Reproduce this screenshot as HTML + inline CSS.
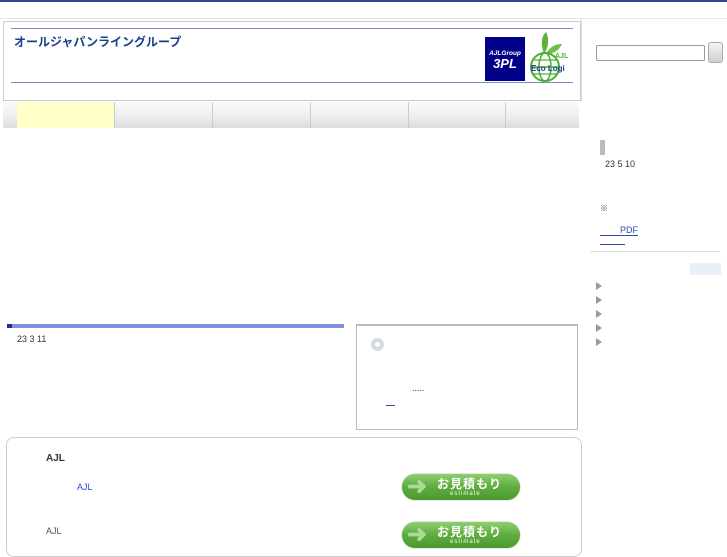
<!DOCTYPE html>
<html><head><meta charset="utf-8">
<style>
*{margin:0;padding:0;box-sizing:border-box}
body{width:727px;height:545px;overflow:hidden;background:#fff;position:relative;font-family:"Liberation Sans","Noto Sans CJK JP",sans-serif;font-size:9px;color:#333}
.a{position:absolute}
.btn{position:absolute;width:118px;height:26px;border-radius:13px;background:linear-gradient(#8fd070,#5eab3e 50%,#4e9a32);box-shadow:0 0 1px #3a7a20}
.btn .ar{position:absolute;left:5px;top:0px;font-size:24px;color:#a8dc94;font-weight:bold;line-height:26px}
.btn .t{position:absolute;left:35px;top:4px;font-size:12px;font-weight:bold;color:#fff;letter-spacing:1px;line-height:13px}
.btn .e{position:absolute;left:48px;top:17px;font-size:6px;color:#e8ffe0;letter-spacing:1px}
.tri{position:absolute;left:596px;width:0;height:0;border-left:6px solid #999;border-top:4px solid transparent;border-bottom:4px solid transparent}
</style></head><body>
<div class="a" style="left:0;top:0;width:727px;height:2px;background:#34468c"></div>
<div class="a" style="left:0;top:18px;width:727px;height:1px;background:#e4e8ee"></div>
<div class="a" style="left:581px;top:19px;width:1px;height:82px;background:#ddd"></div>
<div class="a" style="left:3px;top:21px;width:578px;height:80px;border:1px solid #ccc"></div>
<div class="a" style="left:11px;top:28px;width:562px;height:1px;background:#7a8fc0"></div>
<div class="a" style="left:11px;top:82px;width:562px;height:1px;background:#7a8fc0"></div>
<div class="a" style="left:14px;top:35px;font-size:12px;font-weight:bold;color:#1c3c8c;line-height:15px">オールジャパンライングループ</div>
<div class="a" style="left:485px;top:37px;width:40px;height:44px;background:#000088;color:#fff;text-align:center">
<div style="font-size:6.5px;font-style:italic;font-weight:bold;margin-top:13px">AJLGroup</div>
<div style="font-size:13px;font-style:italic;font-weight:bold;line-height:14px">3PL</div></div>
<svg class="a" style="left:528px;top:30px" width="40" height="54" viewBox="0 0 40 54">
<path d="M16 24 C12 12 14 6 18 2 C22 10 20 18 16 24Z" fill="#5db33a"/>
<path d="M18 24 C22 16 28 14 34 14 C30 22 24 24 18 24Z" fill="#6cc04a"/>
<circle cx="17" cy="37" r="14" fill="none" stroke="#4caf2e" stroke-width="2"/>
<ellipse cx="17" cy="37" rx="6" ry="14" fill="none" stroke="#4caf2e" stroke-width="1.5"/>
<line x1="3" y1="37" x2="31" y2="37" stroke="#4caf2e" stroke-width="1.5"/>
<line x1="5" y1="30" x2="29" y2="30" stroke="#4caf2e" stroke-width="1.2"/>
<line x1="5" y1="44" x2="29" y2="44" stroke="#4caf2e" stroke-width="1.2"/>
<text x="27" y="28" font-size="7" font-weight="bold" fill="#4caf2e" font-family="Liberation Sans">AJL</text>
<text x="3" y="41" font-size="8" font-weight="bold" fill="#1a3a9a" font-family="Liberation Sans">Eco Logi</text>
</svg>
<div class="a" style="left:3px;top:102px;width:576px;height:26px;background:linear-gradient(#fafafa,#ececec 60%,#dcdcdc)"></div>
<div class="a" style="left:17px;top:102px;width:97px;height:26px;background:#ffffc8"></div>
<div class="a" style="left:114px;top:102px;width:1px;height:26px;background:#ccc"></div>
<div class="a" style="left:212px;top:102px;width:1px;height:26px;background:#ccc"></div>
<div class="a" style="left:310px;top:102px;width:1px;height:26px;background:#ccc"></div>
<div class="a" style="left:408px;top:102px;width:1px;height:26px;background:#ccc"></div>
<div class="a" style="left:505px;top:102px;width:1px;height:26px;background:#ccc"></div>
<div class="a" style="left:596px;top:45px;width:109px;height:16px;border:1px solid #999;border-radius:2px;background:#fff"></div>
<div class="a" style="left:708px;top:42px;width:15px;height:21px;border:1px solid #aaa;border-radius:3px;background:linear-gradient(#f4f4f4,#d0d0d0)"></div>
<div class="a" style="left:600px;top:140px;width:5px;height:15px;background:#bbb"></div>
<div class="a" style="left:605px;top:159px">23 5 10</div>
<div class="a" style="left:600px;top:203px;font-size:8px;color:#555">※</div>
<div class="a" style="left:600px;top:225px;width:38px;color:#2a4cb0;border-bottom:1px solid #2a4cb0;padding-left:20px;height:11px">PDF</div>
<div class="a" style="left:600px;top:244px;width:25px;height:1px;background:#2a4cb0"></div>
<div class="a" style="left:590px;top:251px;width:130px;height:1px;background:#ddd"></div>
<div class="a" style="left:690px;top:263px;width:31px;height:12px;background:#e8f0fa"></div>
<div class="tri" style="top:282px"></div>
<div class="tri" style="top:296px"></div>
<div class="tri" style="top:310px"></div>
<div class="tri" style="top:324px"></div>
<div class="tri" style="top:338px"></div>
<div class="a" style="left:7px;top:324px;width:337px;height:4px;background:#8090d8"></div>
<div class="a" style="left:7px;top:324px;width:5px;height:4px;background:#2a2a9a"></div>
<div class="a" style="left:17px;top:334px">23 3 11</div>
<div class="a" style="left:356px;top:324px;width:222px;height:106px;border:1px solid #bbb;border-top:2px solid #bbb"></div>
<div class="a" style="left:371px;top:338px;width:13px;height:13px;border-radius:50%;border:4px solid #d4dbe0;background:#fff"></div>
<div class="a" style="left:412px;top:383px">.....</div>
<div class="a" style="left:386px;top:405px;width:9px;height:1px;background:#2a4cb0"></div>
<div class="a" style="left:6px;top:437px;width:576px;height:120px;border:1px solid #ccc;border-radius:8px"></div>
<div class="a" style="left:46px;top:453px;font-size:10px;font-weight:bold;color:#333">AJL</div>
<div class="a" style="left:77px;top:482px;color:#2a4cd0">AJL</div>
<div class="a" style="left:46px;top:526px;color:#555">AJL</div>
<div class="btn" style="left:402px;top:474px"><span class="ar">➜</span><span class="t">お見積もり</span><span class="e">estimate</span></div>
<div class="btn" style="left:402px;top:522px"><span class="ar">➜</span><span class="t">お見積もり</span><span class="e">estimate</span></div>
</body></html>
